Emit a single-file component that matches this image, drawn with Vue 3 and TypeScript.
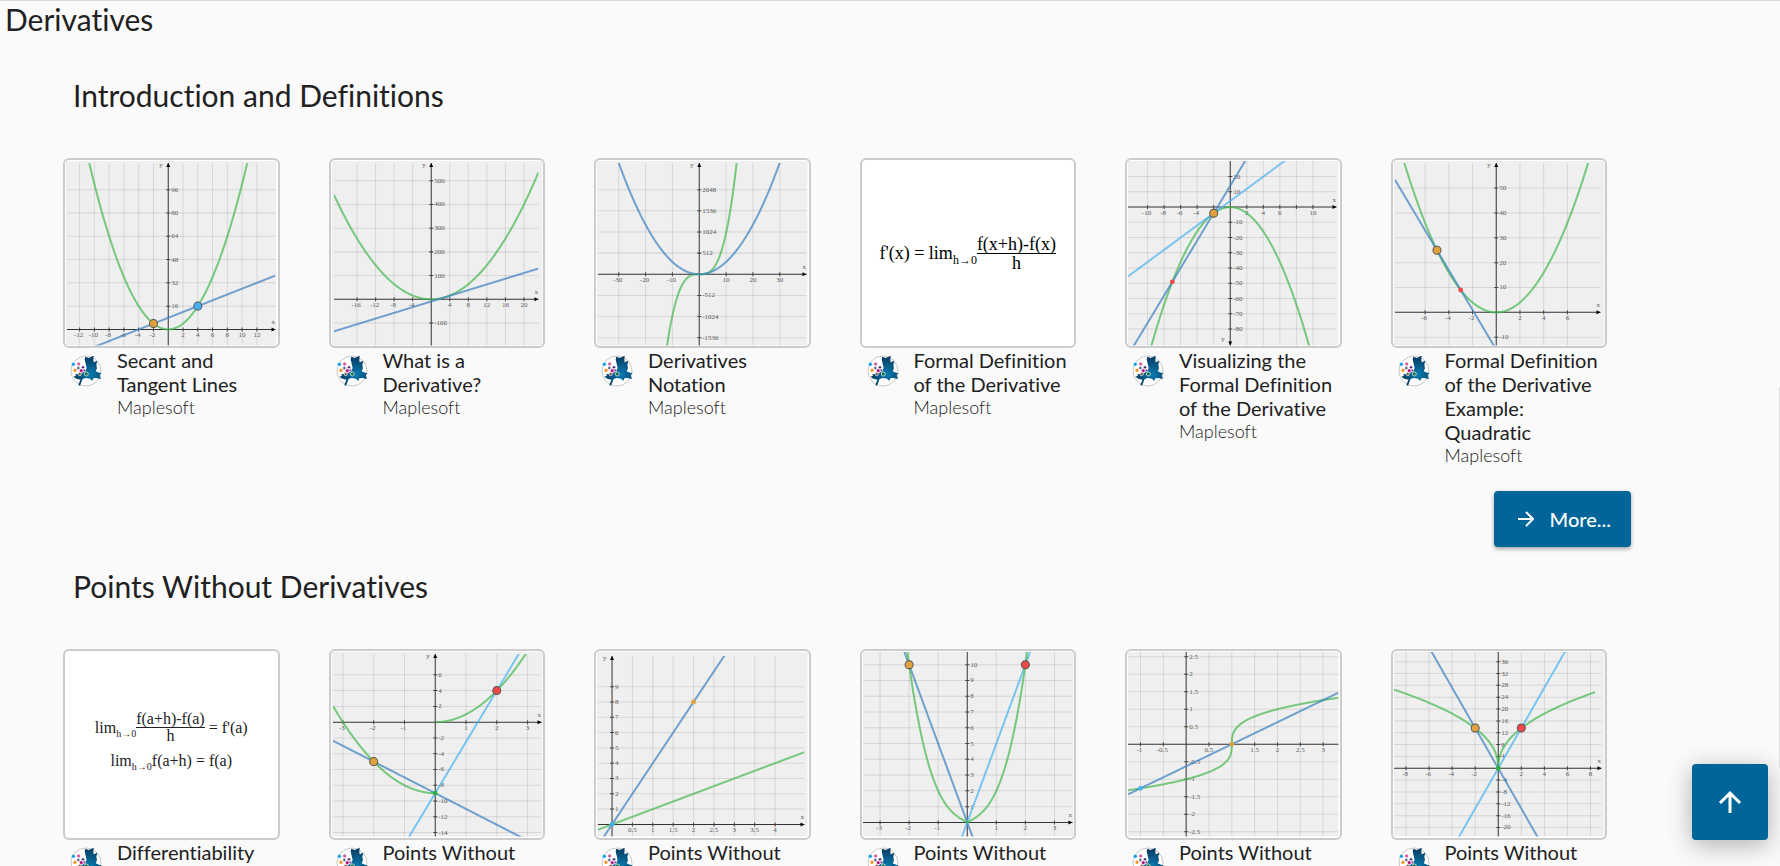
<script setup lang="ts">
type Fn = (x: number) => number
type Tone = 'green' | 'blue' | 'sky'

interface Curve { tone: Tone; fn: Fn; from?: number; to?: number }
interface Dot { x: number; y: number; fill: string; big?: boolean }

interface PlotSpec {
  origin: [number, number]
  unit: [number, number]
  box: [number, number, number, number]
  xTicks: number[]
  yTicks: number[]
  hiddenLabels?: string[]
  arrows: 'both' | 'x' | 'down' | 'none'
  curves: Curve[]
  dots?: Dot[]
}

interface Card {
  title: string
  author?: string
  plot?: PlotSpec
  formula?: 'quotient' | 'continuity'
}

interface Section { heading: string; cards: Card[]; more?: boolean }

const ORANGE = '#dfa23c'
const RED = '#ef4848'
const SKY = '#48b0ee'
const GREEN = '#2fae4a'

const steps = (from: number, to: number, step: number): number[] => {
  const out: number[] = []
  for (let v = from; v <= to + step / 1000; v += step) {
    if (Math.abs(v) > step / 1000) out.push(Number(v.toFixed(2)))
  }
  return out
}

const sections: Section[] = [
  {
    heading: 'Introduction and Definitions',
    more: true,
    cards: [
      {
        title: 'Secant and Tangent Lines', author: 'Maplesoft',
        plot: {
          origin: [105, 171], unit: [7.37, 1.451], box: [4, 5, 212, 187],
          xTicks: steps(-12, 12, 2), yTicks: steps(16, 96, 16), arrows: 'both',
          curves: [
            { tone: 'green', fn: x => x * x },
            { tone: 'blue', fn: x => 2 * x + 8 },
          ],
          dots: [{ x: -2, y: 4, fill: ORANGE, big: true }, { x: 4, y: 16, fill: SKY, big: true }],
        },
      },
      {
        title: 'What is a Derivative?', author: 'Maplesoft',
        plot: {
          origin: [102, 141], unit: [4.625, 0.2367], box: [5, 5, 209, 187],
          xTicks: steps(-16, 20, 4), yTicks: steps(-100, 500, 100), arrows: 'both',
          curves: [
            { tone: 'green', fn: x => x * x },
            { tone: 'blue', fn: x => 6 * x - 9 },
          ],
        },
      },
      {
        title: 'Derivatives Notation', author: 'Maplesoft',
        plot: {
          origin: [105, 116], unit: [2.678, 0.0412], box: [4, 5, 212, 187],
          xTicks: steps(-30, 30, 10), yTicks: steps(-1536, 2048, 512), arrows: 'both',
          curves: [
            { tone: 'green', fn: x => x * x * x },
            { tone: 'blue', fn: x => 3 * x * x },
          ],
        },
      },
      { title: 'Formal Definition of the Derivative', author: 'Maplesoft', formula: 'quotient' },
      {
        title: 'Visualizing the Formal Definition of the Derivative', author: 'Maplesoft',
        plot: {
          origin: [105, 49], unit: [8.25, 1.521], box: [3, 3, 211, 187],
          xTicks: steps(-10, 10, 2), yTicks: steps(-80, 20, 10), hiddenLabels: ['x8', 'x-2'], arrows: 'down',
          curves: [
            { tone: 'green', fn: x => -x * x },
            { tone: 'sky', fn: x => 4 * x + 4 },
            { tone: 'blue', fn: x => 9 * x + 14 },
          ],
          dots: [{ x: -2, y: -4, fill: ORANGE, big: true }, { x: -7, y: -49, fill: RED }],
        },
      },
      {
        title: 'Formal Definition of the Derivative Example: Quadratic', author: 'Maplesoft',
        plot: {
          origin: [105, 154], unit: [11.83, 2.48], box: [4, 5, 209, 187],
          xTicks: steps(-6, 6, 2), yTicks: steps(-10, 50, 10), arrows: 'both',
          curves: [
            { tone: 'green', fn: x => x * x },
            { tone: 'blue', fn: x => -8 * x - 15 },
          ],
          dots: [{ x: -5, y: 25, fill: ORANGE, big: true }, { x: -3, y: 9, fill: RED }],
        },
      },
    ],
  },
  {
    heading: 'Points Without Derivatives',
    cards: [
      { title: 'Differentiability', formula: 'continuity' },
      {
        title: 'Points Without',
        plot: {
          origin: [106, 73], unit: [30.7, 7.87], box: [4, 5, 212, 187],
          xTicks: steps(-3, 3, 1), yTicks: steps(-14, 6, 2), arrows: 'both',
          curves: [
            { tone: 'sky', fn: x => 6.5 * x - 9 },
            { tone: 'blue', fn: x => -2 * x - 9 },
            { tone: 'green', fn: x => x * x - 9, to: 0 },
            { tone: 'green', fn: x => x * x, from: 0 },
          ],
          dots: [
            { x: -2, y: -5, fill: ORANGE, big: true },
            { x: 2, y: 4, fill: RED, big: true },
            { x: 0, y: -9, fill: GREEN },
          ],
        },
      },
      {
        title: 'Points Without',
        plot: {
          origin: [18, 175], unit: [40.67, 15.27], box: [4, 7, 210, 187],
          xTicks: steps(0.5, 4, 0.5), yTicks: steps(1, 9, 1), arrows: 'both',
          curves: [
            { tone: 'green', fn: x => x },
            { tone: 'blue', fn: x => 4 * x },
          ],
          dots: [{ x: 2, y: 8, fill: ORANGE }, { x: 0, y: 0, fill: SKY }],
        },
      },
      {
        title: 'Points Without',
        plot: {
          origin: [107, 173], unit: [29, 15.73], box: [3, 3, 212, 187],
          xTicks: steps(-3, 3, 1), yTicks: steps(1, 10, 1), arrows: 'x',
          curves: [
            { tone: 'blue', fn: x => -5 * x },
            { tone: 'sky', fn: x => 5 * x },
            { tone: 'green', fn: x => Math.abs(x) ** 3 + Math.abs(x) },
          ],
          dots: [{ x: -2, y: 10, fill: ORANGE, big: true }, { x: 2, y: 10, fill: RED, big: true }],
        },
      },
      {
        title: 'Points Without',
        plot: {
          origin: [61, 95], unit: [45.56, 34.93], box: [3, 3, 213, 187],
          xTicks: steps(-1, 3, 0.5), yTicks: steps(-2.5, 2.5, 0.5), hiddenLabels: ['x1'], arrows: 'none',
          curves: [
            { tone: 'green', fn: x => Math.cbrt(x - 1) },
            { tone: 'blue', fn: x => 0.63 * (x - 1) },
          ],
          dots: [{ x: 1, y: 0, fill: ORANGE }, { x: -1, y: -1.26, fill: SKY }],
        },
      },
      {
        title: 'Points Without',
        plot: {
          origin: [107, 119], unit: [11.5, 2.954], box: [3, 3, 210, 187],
          xTicks: steps(-8, 8, 2), yTicks: steps(-20, 36, 4), arrows: 'x',
          curves: [
            { tone: 'green', fn: x => 9.93 * Math.abs(x) ** 0.447, to: 8.4 },
            { tone: 'blue', fn: x => -6.8 * x },
            { tone: 'sky', fn: x => 6.8 * x },
          ],
          dots: [
            { x: -2, y: 13.6, fill: ORANGE, big: true },
            { x: 2, y: 13.6, fill: RED, big: true },
            { x: 0, y: 0, fill: GREEN },
          ],
        },
      },
    ],
  },
]

const px = (p: PlotSpec, x: number) => p.origin[0] + x * p.unit[0]
const py = (p: PlotSpec, y: number) => p.origin[1] - y * p.unit[1]

/* Samples a curve every quarter unit of the drawing; the clip path trims what leaves the plot. */
const trace = (p: PlotSpec, c: Curve): string => {
  const [left, , right] = p.box
  const start = Math.max(left, c.from === undefined ? left : px(p, c.from))
  const end = Math.min(right, c.to === undefined ? right : px(p, c.to))
  const pts: string[] = []
  for (let s = start; s <= end + 0.001; s += 0.25) {
    const y = py(p, c.fn((s - p.origin[0]) / p.unit[0]))
    pts.push(`${s.toFixed(2)},${Math.max(-400, Math.min(600, y)).toFixed(2)}`)
  }
  return pts.join(' ')
}

const shown = (p: PlotSpec, axis: string, v: number) => !(p.hiddenLabels ?? []).includes(axis + v)

const scrollTop = () => window.scrollTo({ top: 0, behavior: 'smooth' })
</script>

<template>
  <main class="page">
    <h1 class="page-title">Derivatives</h1>

    <section v-for="(section, si) in sections" :key="si" class="group">
      <h2 class="group-title">{{ section.heading }}</h2>
      <div class="cards">
        <a v-for="(card, ci) in section.cards" :key="ci" class="card" href="#">
          <div class="thumb">
            <svg v-if="card.plot" class="plot" viewBox="2 2 212 186" aria-hidden="true">
              <clipPath :id="`clip-${si}-${ci}`">
                <rect
                  :x="card.plot.box[0]" :y="card.plot.box[1]"
                  :width="card.plot.box[2] - card.plot.box[0]" :height="card.plot.box[3] - card.plot.box[1]"
                />
              </clipPath>
              <rect class="plot-bg" x="3" y="3" width="210" height="184" />
              <g class="grid-lines">
                <line
                  v-for="t in card.plot.xTicks" :key="`gx${t}`"
                  :x1="px(card.plot, t)" :x2="px(card.plot, t)" :y1="card.plot.box[1]" :y2="card.plot.box[3]"
                />
                <line
                  v-for="t in card.plot.yTicks" :key="`gy${t}`"
                  :x1="card.plot.box[0]" :x2="card.plot.box[2]" :y1="py(card.plot, t)" :y2="py(card.plot, t)"
                />
              </g>
              <g class="axis">
                <line :x1="card.plot.box[0]" :x2="card.plot.box[2]" :y1="card.plot.origin[1]" :y2="card.plot.origin[1]" />
                <line :x1="card.plot.origin[0]" :x2="card.plot.origin[0]" :y1="card.plot.box[1]" :y2="card.plot.box[3]" />
              </g>
              <g class="tick">
                <line
                  v-for="t in card.plot.xTicks" :key="`tx${t}`"
                  :x1="px(card.plot, t)" :x2="px(card.plot, t)"
                  :y1="card.plot.origin[1] - 2" :y2="card.plot.origin[1] + 2"
                />
                <line
                  v-for="t in card.plot.yTicks" :key="`ty${t}`"
                  :x1="card.plot.origin[0] - 2" :x2="card.plot.origin[0] + 2"
                  :y1="py(card.plot, t)" :y2="py(card.plot, t)"
                />
              </g>
              <g class="labels">
                <template v-for="t in card.plot.xTicks" :key="`lx${t}`">
                  <text
                    v-if="shown(card.plot, 'x', t)" text-anchor="middle"
                    :x="px(card.plot, t) - (t < 0 ? 1 : 0)" :y="card.plot.origin[1] + 8"
                  >{{ t }}</text>
                </template>
                <text
                  v-for="t in card.plot.yTicks" :key="`ly${t}`"
                  :x="card.plot.origin[0] + 3" :y="py(card.plot, t) + 2"
                >{{ t }}</text>
                <text v-if="card.plot.arrows !== 'none'" :x="card.plot.box[2] - 4" :y="card.plot.origin[1] - 5">x</text>
                <text v-if="card.plot.arrows === 'both'" :x="card.plot.origin[0] - 9" :y="card.plot.box[1] + 4">y</text>
                <text v-if="card.plot.arrows === 'down'" :x="card.plot.origin[0] - 9" :y="card.plot.box[3] - 4">y</text>
              </g>
              <path
                v-if="card.plot.arrows !== 'none'" class="arrow"
                :d="`M${card.plot.box[2]} ${card.plot.origin[1]}l-4 -2v4z`"
              />
              <path
                v-if="card.plot.arrows === 'both'" class="arrow"
                :d="`M${card.plot.origin[0]} ${card.plot.box[1]}l-2 4h4z`"
              />
              <path
                v-if="card.plot.arrows === 'down'" class="arrow"
                :d="`M${card.plot.origin[0]} ${card.plot.box[3]}l-2 -4h4z`"
              />
              <g :clip-path="`url(#clip-${si}-${ci})`">
                <polyline
                  v-for="(curve, k) in card.plot.curves" :key="k"
                  :class="['curve', curve.tone]" :points="trace(card.plot, curve)"
                />
              </g>
              <circle
                v-for="(dot, k) in card.plot.dots" :key="`d${k}`"
                :class="{ outlined: dot.big }" :r="dot.big ? 4 : 2.4"
                :cx="px(card.plot, dot.x)" :cy="py(card.plot, dot.y)" :fill="dot.fill"
              />
            </svg>

            <div v-else-if="card.formula === 'quotient'" class="formula large">
              <div class="equation">
                <span>f'(x) = lim<sub>h→0</sub></span>
                <span class="fraction"><span class="over">f(x+h)-f(x)</span><span>h</span></span>
              </div>
            </div>

            <div v-else class="formula">
              <div class="equation">
                <span>lim<sub>h→0</sub></span>
                <span class="fraction"><span class="over">f(a+h)-f(a)</span><span>h</span></span>
                <span class="rest">= f'(a)</span>
              </div>
              <div class="equation">
                <span>lim<sub>h→0</sub>f(a+h) = f(a)</span>
              </div>
            </div>
          </div>

          <div class="meta">
            <svg class="avatar" viewBox="0 0 96 96" aria-hidden="true">
              <defs>
                <radialGradient :id="`leaf-${si}-${ci}`" cx="0.6" cy="0.62" r="0.55">
                  <stop offset="0" stop-color="#0a7bb0" />
                  <stop offset="1" stop-color="#073f66" />
                </radialGradient>
              </defs>
              <circle cx="48" cy="48" r="45" fill="#fff" stroke="#c8c8c8" stroke-width="3" />
              <path
                :fill="`url(#leaf-${si}-${ci})`"
                d="M71 2l-1 13 1 7 11-5-3 12 2 11-4 9 12 5 6 1-6 5 4 12-14-3-9 1-3 8-7-7-13-2-9 3-8 20-5-2 6-16-12-3-9-6 8-3-2-4 22-4 12-14-3-14-3-13 2-8 10 4z"
              />
              <g stroke="#fff" stroke-width="2">
                <circle cx="10" cy="28" r="6" fill="#0a9be0" />
                <circle cx="26" cy="27" r="6" fill="#d0629c" />
                <circle cx="15" cy="46" r="6" fill="#f7931e" />
                <circle cx="25" cy="39" r="5" fill="#54658a" />
                <circle cx="39" cy="37" r="5" fill="#4b2f73" />
                <circle cx="34" cy="47" r="6" fill="#b5127c" />
                <circle cx="43" cy="46" r="4" fill="#6f4a97" />
                <circle cx="29" cy="57" r="5" fill="#7a5a48" />
                <circle cx="49" cy="57" r="6" fill="#13704a" />
              </g>
            </svg>
            <div class="text">
              <div class="title">{{ card.title }}</div>
              <div v-if="card.author" class="author">{{ card.author }}</div>
            </div>
          </div>
        </a>
      </div>
      <div v-if="section.more" class="actions">
        <button class="more" type="button">
          <svg viewBox="0 0 16 16" aria-hidden="true"><path d="M0 8h14M8 1l7 7-7 7" /></svg>
          More...
        </button>
      </div>
    </section>

    <button class="to-top" type="button" aria-label="Back to top" @click="scrollTop">
      <svg viewBox="0 0 24 24" aria-hidden="true"><path d="M12 23V3M2 13L12 3l10 10" /></svg>
    </button>
    <div class="edge"></div>
  </main>
</template>

<style>
body {
  margin: 0;
  background: #fafafa;
}
</style>

<style scoped>
.page {
  box-sizing: border-box;
  height: 100vh;
  overflow: hidden;
  border-top: 1px solid #dadada;
  background: #fafafa;
  color: #212121;
  font-family: Lato, "Liberation Sans", sans-serif;
  font-variant-ligatures: no-common-ligatures;
}

.page-title,
.group-title {
  margin: 0;
  font-size: 30px;
  line-height: 36px;
  font-weight: 400;
}

.page-title {
  padding-left: 5px;
}

.group {
  padding: 40px 173px 0 63px;
}

.group + .group {
  padding-top: 21px;
}

.group-title {
  padding-left: 10px;
}

.cards {
  display: grid;
  grid-template-columns: repeat(6, minmax(0, 1fr));
  column-gap: 49px;
  margin-top: 45px;
}

.card {
  color: inherit;
  text-decoration: none;
}

.thumb {
  box-sizing: border-box;
  aspect-ratio: 216 / 190;
  border: 2px solid #ccc;
  border-radius: 6px;
  background: #fff;
  overflow: hidden;
}

.plot {
  display: block;
  width: 100%;
  height: 100%;
}

.plot-bg {
  fill: #efefef;
}

.grid-lines line {
  stroke: #000;
  stroke-opacity: 0.1;
}

.axis line {
  stroke: #333;
  stroke-width: 1;
}

.tick line {
  stroke: #444;
  stroke-width: 1;
}

.labels {
  font-family: "Liberation Serif", serif;
  font-size: 7px;
  fill: #5a5a5a;
}

.arrow {
  fill: #000;
}

.curve {
  fill: none;
  stroke-width: 2;
  stroke-opacity: 0.7;
}

.green { stroke: #42b84c; }
.blue { stroke: #3a80c0; }
.sky { stroke: #48b2f2; }

.outlined {
  stroke: #555;
  stroke-width: 1;
}

.formula {
  box-sizing: border-box;
  display: flex;
  flex-direction: column;
  align-items: center;
  justify-content: center;
  gap: 8px;
  height: 100%;
  padding-bottom: 8px;
  color: #222;
  font-family: "Liberation Serif", serif;
  font-size: 16px;
  line-height: 18px;
  white-space: nowrap;
}

.formula.large {
  padding-bottom: 0;
  color: #000;
  font-size: 18px;
}

.equation {
  display: flex;
  align-items: center;
}

.formula sub {
  font-size: 10px;
  line-height: 0;
}

.formula.large sub {
  font-size: 12px;
}

.fraction {
  display: flex;
  flex-direction: column;
  align-items: center;
  line-height: 16px;
}

.large .fraction {
  line-height: 18px;
}

.over {
  border-bottom: 1px solid currentColor;
}

.rest {
  padding-left: 4px;
}

.meta {
  display: flex;
  align-items: flex-start;
}

.avatar {
  flex: none;
  width: 32px;
  height: 32px;
  margin: 7px 15px 0 7px;
}

.text {
  min-width: 0;
}

.title {
  font-size: 20px;
  line-height: 24px;
}

.author {
  font-size: 18px;
  line-height: 22px;
  font-weight: 300;
}

.actions {
  display: flex;
  justify-content: flex-end;
  margin: 25px -24px 0 0;
}

.more {
  display: flex;
  align-items: center;
  gap: 16px;
  height: 56px;
  padding: 0 20px 0 24px;
  border: 0;
  border-radius: 4px;
  background: #069;
  box-shadow: 0 2px 4px rgba(0, 0, 0, 0.35);
  color: #fff;
  font: 500 20px/24px Lato, sans-serif;
}

.more svg {
  width: 16px;
  height: 16px;
}

.more path,
.to-top path {
  fill: none;
  stroke: currentColor;
  stroke-width: 2;
}

.to-top {
  position: fixed;
  right: 12px;
  bottom: 26px;
  display: grid;
  place-items: center;
  width: 76px;
  height: 76px;
  padding: 0;
  border: 0;
  border-radius: 4px;
  background: #069;
  box-shadow: 0 5px 25px rgba(0, 0, 0, 0.3);
  color: #fff;
}

.to-top svg {
  width: 24px;
  height: 24px;
}

.to-top path {
  stroke-width: 3;
}

.edge {
  position: fixed;
  top: 387px;
  right: 0;
  bottom: 98px;
  width: 1px;
  background: #ddd;
}
</style>
